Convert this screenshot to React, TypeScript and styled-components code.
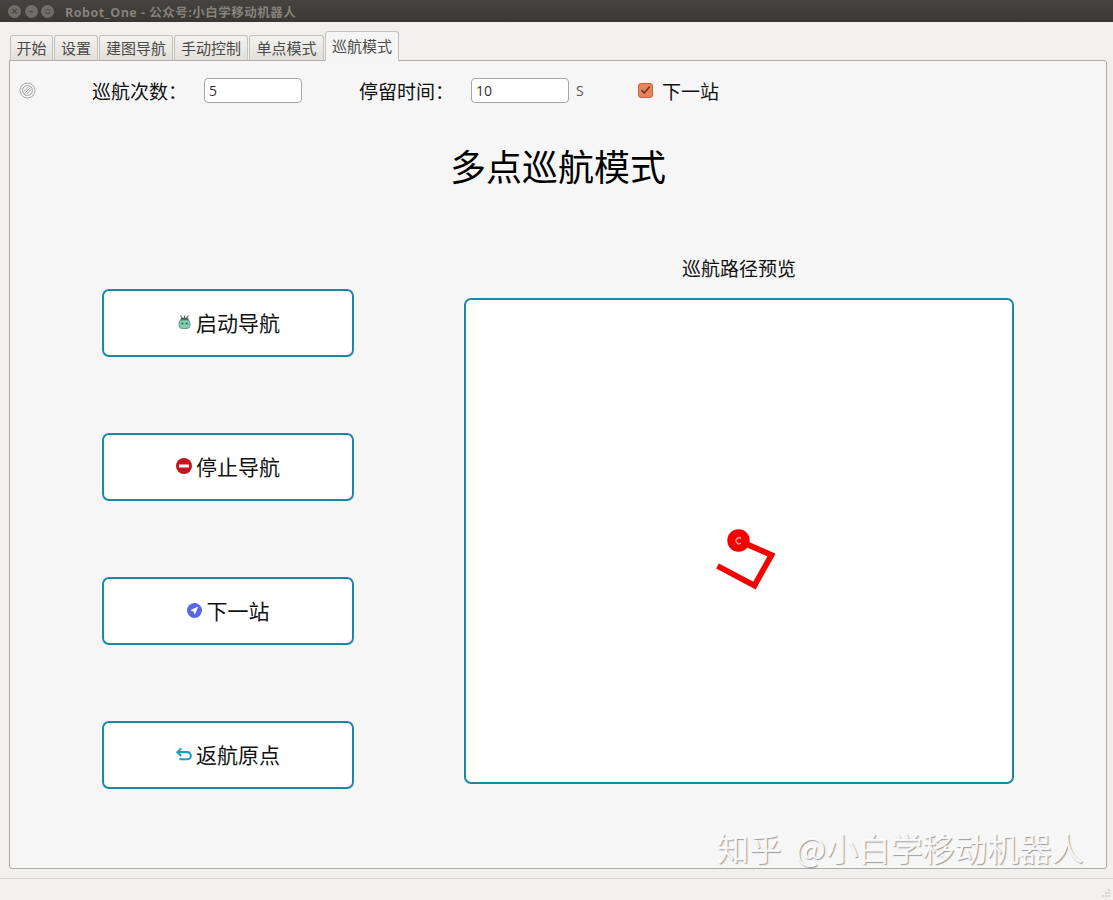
import React from "react";
import styled, { createGlobalStyle } from "styled-components";

const Global = createGlobalStyle`
  html, body { margin: 0; padding: 0; background: #f0efed; }
  * { box-sizing: border-box; }
  body { font-family: "Noto Sans CJK SC", "Noto Sans", sans-serif; }
`;

const Window = styled.div`
  width: 1113px; height: 900px; display: flex; flex-direction: column;
  background: #f1f0ee; position: relative; overflow: hidden;
`;
const TitleBar = styled.header`
  height: 22px; flex: none; display: flex; align-items: center; padding-left: 8px;
  background: linear-gradient(#45443f, #393834);
`;
const WinButtons = styled.div`display: flex; gap: 3.5px; width: 57px;`;
const WinButton = styled.span`
  width: 13px; height: 13px; border-radius: 50%; background: #6f6e68;
  color: #3f3e3a; font: bold 9px/13px "DejaVu Sans", sans-serif; text-align: center;
`;
const TitleText = styled.span`
  font: bold 12.5px "Open Sans", "Noto Sans CJK SC", sans-serif; color: #85837b; letter-spacing: .5px;
`;
const Main = styled.main`flex: 1; padding: 9px 6px 9px 9px; display: flex; flex-direction: column; min-height: 0;`;
const TabBar = styled.nav`display: flex; align-items: flex-end; height: 30px; padding-left: 1px; gap: 1px; margin-bottom: -1px; position: relative; z-index: 1;`;
const Tab = styled.div<{ $active?: boolean; $w: number }>`
  width: ${p => p.$w}px; height: ${p => (p.$active ? 30 : 26)}px;
  border: 1px solid #c4c2bd; border-bottom: ${p => (p.$active ? "none" : "1px solid #b0aeaa")};
  border-radius: 3px 3px 0 0;
  background: ${p => (p.$active ? "#f5f5f5" : "linear-gradient(#f3f2f0, #e2e0dc)")};
  color: #4a4a46; font-size: 15px; line-height: ${p => (p.$active ? "27px" : "24px")}; text-align: center;
  white-space: nowrap;
`;
const Pane = styled.section`
  flex: 1; position: relative; background: #f6f6f6; border: 1px solid #adaba7;
  border-radius: 0 3px 3px 3px; padding: 0 0 0 9px; display: flex; flex-direction: column;
`;
const TopRow = styled.div`display: flex; align-items: center; height: 58px;`;
const Label = styled.span<{ $w: number; $indent?: number }>`
  width: ${p => p.$w}px; padding-left: ${p => p.$indent ?? 0}px; font-size: 19px; color: #111; white-space: nowrap;
`;
const BanSlot = styled.span`width: 73px; display: flex; align-items: center;`;
const Field = styled.input`
  width: 98px; height: 25px; border: 1px solid #a9a7a3; border-radius: 4px; background: #fff;
  font: 14px "Open Sans", sans-serif; color: #333; padding: 0 4px; outline: none;
`;
const Unit = styled.span`font: 14px "Open Sans", sans-serif; color: #555; margin-left: 7px; width: 62px;`;
const Check = styled.span`
  width: 15px; height: 15px; border-radius: 3px; background: #e8835f; border: 1px solid #c9623f;
  display: flex; align-items: center; justify-content: center; margin-right: 9px;
`;
const Heading = styled.h1`
  margin: 13px 0 0; height: 66px; font-size: 36px; font-weight: 400; line-height: 66px; color: #000;
  text-align: center; padding-right: 9px;
`;
const Content = styled.div`display: flex; margin-top: 44px; padding-left: 83px;`;
const ButtonColumn = styled.div`
  width: 252px; display: flex; flex-direction: column; gap: 76px; padding-top: 47px; margin-right: 110px;
`;
const NavButton = styled.button`
  width: 252px; height: 68px; background: #fff; border: 2px solid #1d87a8; border-radius: 7px;
  display: flex; align-items: center; justify-content: center; gap: 4px; padding: 0 0 2px;
  font-family: inherit; font-size: 21px; color: #111;
`;
const IconSlot = styled.span`width: 16px; display: flex; justify-content: center; align-items: center;`;
const PreviewColumn = styled.div`width: 550px; display: flex; flex-direction: column; align-items: center;`;
const PreviewLabel = styled.div`height: 56px; padding-top: 12px; font-size: 19px; line-height: 28px; color: #111;`;
const Preview = styled.div`
  width: 550px; height: 486px; background: #fff; border: 2px solid #1d87a8; border-radius: 7px; overflow: hidden;
`;
const PathDrawing = styled.svg`display: block; filter: blur(.45px);`;
const Watermark = styled.div`
  position: absolute; left: 717px; top: 824px; font-size: 32.2px; line-height: 46px; white-space: nowrap; word-spacing: 7px;
  color: rgba(255,255,255,.9); text-shadow: 1px 1px 1px rgba(120,120,120,.7);
`;
const StatusBar = styled.footer`
  height: 22px; flex: none; border-top: 1px solid #d8d6d2; display: flex; justify-content: flex-end; align-items: flex-end; padding: 0 2px 2px 0;
`;

const BanIcon = () => (
  <svg width="17" height="17" viewBox="0 0 17 17" fill="none" stroke="#a2a2a2" strokeWidth="1">
    <circle cx="8.5" cy="8.5" r="7.5" />
    <circle cx="8.5" cy="8.5" r="5" />
    <path d="M5.5 11.5 11.5 5.5M7.2 12.4 12.4 7.2M4.6 9.8 9.8 4.6" />
  </svg>
);
const RobotIcon = () => (
  <svg width="13" height="14" viewBox="0 0 13 14">
    <path d="M2.5 .5 4.8 3.5M10.5 .5 8.2 3.5M6.5 .5V3" stroke="#55625c" strokeWidth="1.1" />
    <rect x="2.5" y="2.8" width="8" height="3" rx="1.2" fill="#55625c" />
    <rect x="1" y="5" width="11" height="8.5" rx="3" fill="#7fd0ae" stroke="#4f7c6c" strokeWidth=".7" />
    <circle cx="4.4" cy="8.4" r="1" fill="#2f5a4c" />
    <circle cx="8.6" cy="8.4" r="1" fill="#2f5a4c" />
  </svg>
);
const StopIcon = () => (
  <svg width="16" height="16" viewBox="0 0 16 16">
    <circle cx="8" cy="8" r="8" fill="#c8141f" />
    <rect x="3" y="6.4" width="10" height="3.2" rx=".6" fill="#fff" />
  </svg>
);
const NextIcon = () => (
  <svg width="15" height="15" viewBox="0 0 15 15">
    <circle cx="7.5" cy="7.5" r="7.5" fill="#5468e8" />
    <path d="M11.4 3.6 3.2 7.2 6.6 8.4 7.8 11.8Z" fill="#fff" />
  </svg>
);
const ReturnIcon = () => (
  <svg width="17" height="15" viewBox="0 0 17 15" fill="none" stroke="#1f9bc9" strokeWidth="2.2">
    <path d="M1.5 5H12A3.8 3.8 0 0 1 12 12.6H3.5" />
    <path d="M5.6 1 1.5 5 5.6 9" />
  </svg>
);

const tabs: [string, number][] = [["开始", 44], ["设置", 44], ["建图导航", 74], ["手动控制", 74], ["单点模式", 75]];
const buttons: [React.ReactNode, string][] = [
  [<RobotIcon key="r" />, "启动导航"],
  [<StopIcon key="s" />, "停止导航"],
  [<NextIcon key="n" />, "下一站"],
  [<ReturnIcon key="b" />, "返航原点"],
];

export default function App() {
  return (
    <Window>
      <Global />
      <TitleBar>
        <WinButtons>
          <WinButton>×</WinButton>
          <WinButton>–</WinButton>
          <WinButton>▫</WinButton>
        </WinButtons>
        <TitleText>Robot_One - 公众号:小白学移动机器人</TitleText>
      </TitleBar>
      <Main>
        <TabBar>
          {tabs.map(([t, w], i) => <Tab key={t} $w={i === 0 ? w - 1 : w}>{t}</Tab>)}
          <Tab $active $w={74}>巡航模式</Tab>
        </TabBar>
        <Pane>
          <TopRow>
            <BanSlot><BanIcon /></BanSlot>
            <Label $w={112}>巡航次数：</Label>
            <Field defaultValue="5" />
            <Label $w={169} $indent={57}>停留时间：</Label>
            <Field defaultValue="10" />
            <Unit>S</Unit>
            <Check>
              <svg width="11" height="10" viewBox="0 0 11 10" fill="none" stroke="#7a2f18" strokeWidth="1.6">
                <path d="M1.5 5 4.2 8 9.8 1.5" />
              </svg>
            </Check>
            <Label $w={80}>下一站</Label>
          </TopRow>
          <Heading>多点巡航模式</Heading>
          <Content>
            <ButtonColumn>
              {buttons.map(([icon, text]) => (
                <NavButton key={text}><IconSlot>{icon}</IconSlot><span>{text}</span></NavButton>
              ))}
            </ButtonColumn>
            <PreviewColumn>
              <PreviewLabel>巡航路径预览</PreviewLabel>
              <Preview>
                <PathDrawing width="546" height="482" viewBox="466 300 546 482" fill="none">
                  <path d="M717.5 566 754.5 585.5 771.5 555 738.5 540.5" stroke="#f40000" strokeWidth="5.8" />
                  <circle cx="738.5" cy="540.5" r="11.2" fill="#f40000" />
                  <path d="M741 538.5A3 3 0 1 0 741 543" stroke="#ff9a9a" strokeWidth="1.4" />
                </PathDrawing>
              </Preview>
            </PreviewColumn>
          </Content>
        </Pane>
      </Main>
      <Watermark>知乎 @小白学移动机器人</Watermark>
      <StatusBar>
        <svg width="10" height="10" viewBox="0 0 10 10" fill="#d4d2ce">
          <rect x="7" y="1" width="2" height="2" /><rect x="4" y="4" width="2" height="2" /><rect x="7" y="4" width="2" height="2" />
          <rect x="1" y="7" width="2" height="2" /><rect x="4" y="7" width="2" height="2" /><rect x="7" y="7" width="2" height="2" />
        </svg>
      </StatusBar>
    </Window>
  );
}
